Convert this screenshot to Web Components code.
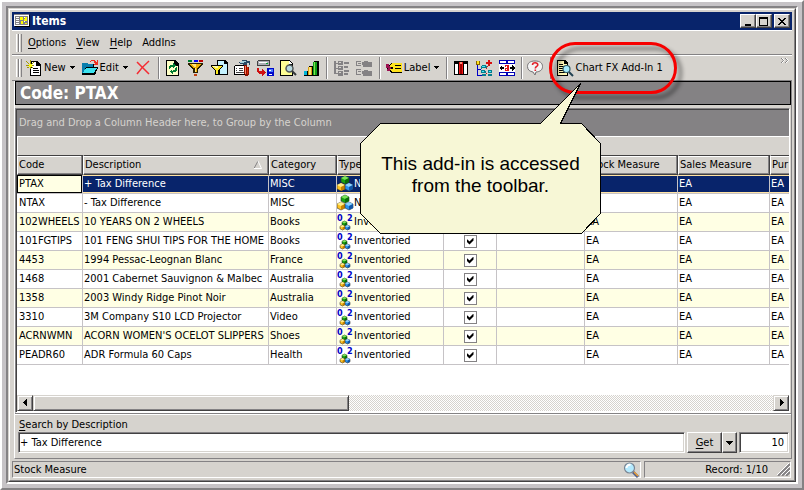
<!DOCTYPE html>
<html lang="en">
<head>
<meta charset="utf-8">
<title>Items</title>
<style>
  html, body { height: 100%; }
  body {
    margin: 0; background: #fff; color: #000; position: relative; overflow: hidden;
    font: 11px/14px "DejaVu Sans Condensed", "DejaVu Sans", Tahoma, sans-serif;
    --face: #d6d3ce; --shade: #848284; --dark: #424142; --navy: #08246b; --silver: #c6c3c6;
  }
  u { text-decoration: underline; text-underline-offset: 2px; }
</style>
</head>
<body>
<app-window>
  <title-bar heading="Items"></title-bar>
  <menu-bar>
    <menu-item><u>O</u>ptions</menu-item>
    <menu-item><u>V</u>iew</menu-item>
    <menu-item><u>H</u>elp</menu-item>
    <menu-item>AddIns</menu-item>
  </menu-bar>
  <tool-bar>
    <tool-button icon="new" menu>New</tool-button>
    <tool-button icon="edit" menu>Edit</tool-button>
    <tool-button icon="delete" hint="Delete"></tool-button>
    <tool-separator></tool-separator>
    <tool-button icon="refresh" hint="Refresh"></tool-button>
    <tool-button icon="funnel" hint="Filter"></tool-button>
    <tool-button icon="pagefilter" hint="Filter page"></tool-button>
    <tool-button icon="tools" hint="Report tools"></tool-button>
    <tool-button icon="transfer" hint="Transfer"></tool-button>
    <tool-button icon="preview" hint="Preview"></tool-button>
    <tool-button icon="chart" hint="Chart"></tool-button>
    <tool-separator></tool-separator>
    <tool-button icon="expand" hint="Expand all"></tool-button>
    <tool-button icon="collapse" hint="Collapse all"></tool-button>
    <tool-separator></tool-separator>
    <tool-button icon="label" menu>Label</tool-button>
    <tool-separator></tool-separator>
    <tool-button icon="columns" hint="Columns"></tool-button>
    <tool-button icon="tree" hint="Group"></tool-button>
    <tool-button icon="fit" hint="Best fit"></tool-button>
    <tool-separator tight></tool-separator>
    <tool-button icon="help" hint="Help"></tool-button>
    <tool-separator></tool-separator>
    <highlight-ring><tool-button icon="addin">Chart FX Add-In 1</tool-button></highlight-ring>
  </tool-bar>
  <main-panel>
    <record-heading>Code: PTAX</record-heading>
    <data-grid></data-grid>
    <search-panel></search-panel>
  </main-panel>
  <status-bar>
    <span>Stock Measure</span>
    <span slot="record">Record: 1/10</span>
  </status-bar>
</app-window>
<callout-note>This add-in is accessed from the toolbar.</callout-note>

<script>
const define = (name, html, setup) => {
  const tpl = document.createElement('template');
  tpl.innerHTML = html;
  customElements.define(name, class extends HTMLElement {
    constructor() {
      super();
      this.attachShadow({ mode: 'open' }).append(tpl.content.cloneNode(true));
    }
    connectedCallback() { if (setup && !this.ready) { this.ready = true; setup(this, this.shadowRoot); } }
  });
};

const page = '<path d="M1 0h9l4 4v12H1z" fill="#000"/><path d="M2 1h7v4h4v10H2z" fill="#ffffc6"/>';
const cube = (x, y, s, a, b, c) => {
  const h = s / 2, q = s / 4;
  return `<path d="M${x} ${y + q}l${h} ${-q}l${h} ${q}v${h}l${-h} ${q}l${-h} ${-q}z" fill="${b}" stroke="#30302a" stroke-width=".6"/>`
    + `<path d="M${x} ${y + q}l${h} ${-q}l${h} ${q}l${-h} ${q}z" fill="${a}"/>`
    + `<path d="M${x + h} ${y + h}l${h} ${-q}v${h}l${-h} ${q}z" fill="${c}"/>`;
};
const smooth = s => `<g shape-rendering="auto">${s}</g>`;
const digit = (x, n) => `<text x="${x}" y="7" font-family="DejaVu Sans Condensed, sans-serif" font-weight="700" font-size="9" fill="#0000c6">${n}</text>`;
const ICONS = {
  app: '<path d="M15 2h1v12H1v-1h14z" fill="#000"/><path d="M0 1h15v12H0z" fill="#fff"/><path d="M0 1h15v1H0zM1 3h13v9H1z" fill="#848284"/><path d="M2 4h3v1H2zm0 2h3v1H2zm0 2h3v1H2zm0 2h3v1H2zM10 4h1v1h-1zM10 8h1v1h-1z" fill="#fff"/><path d="M6 4h3v3H6zm5 0h2v2h-2zM7 8h2v3H7zm3-2h3v2h-3zm1 4h2v1h-2z" fill="#ff0"/>',
  new: '<path d="M5 1h6l4 4v11H4V7h1z" fill="#000"/><path d="M6 2h4v4h4v9H5V8h1z" fill="#fff"/><path d="M11 3l2 2h-2zM7 8h5v1H7zm0 2h6v1H7zm0 2h6v1H7z" fill="#000"/><path d="M0 1h1v1h1v1h1v1h1V0h1v4h1V3h1V2h1v1H7v1H6v1h2v1H6v1h1v1H6V7H5v2H4V7H3v1H1V7h2V6H0V5h3V4H2V3H1V2H0z" fill="#a59a00"/><path d="M3 4h3v3H3z" fill="#ff0"/>',
  edit: '<path d="M0 3h5l1 1h6v3h4v1l-3 7H0z" fill="#000"/><path d="M0 3h5l1 1h5v3H4L1 13H0z" fill="#087dad"/><path d="M4 8h11l-3 5H1z" fill="#3ce3ef"/><path d="M8 1h1V0h4v1h1v1h1V0h1v5h-4V4h1V3h-1V1H9v1H8z" fill="#f03020"/>',
  delete: smooth('<path d="M2 2l12 12M14 1Q7 7 2 14" fill="none" stroke="#f42b32" stroke-width="1.5"/>'),
  refresh: page + '<path d="M9 1h1v4h3v1H9z" fill="#000"/><path d="M4 6h1V5h3V3h1v1h1v1h1v1h-1v1H9v1H8V7H6v1H5v1H4zM6 10h1v1h1v-1h2V8h1V7h1v4h-1v1H8v2H7v-1H6v-1H5v-1h1z" fill="#007d31"/>',
  funnel: '<path d="M0 0h4v2H0z" fill="#007d31"/><path d="M6 0h4v2H6z" fill="#00f"/><path d="M11 0h4v2h-4z" fill="#c00000"/><path d="M0 3h15v2h-1v1h-1v1h-1v1h-1v1h-1v4H5V9H4V8H3V7H2V6H1V5H0z" fill="#2a2000"/><path d="M2 4h11v1h-1v1h-1v1h-1v1H9v4H7V8H5V7H4V6H3V5H2z" fill="#f0b000"/><path d="M4 4h4v3H6V6H5V5H4zM7 8h1v4H7z" fill="#ffe37b"/><path d="M6 14h3v2H6z" fill="#c04010"/>',
  pagefilter: '<path d="M6 0h8l3 3v12H8V8H6z" fill="#000"/><path d="M7 1h6v3h3v10H9V6H7z" fill="#c6f3ff"/><path d="M0 5h12v2h-1v1h-1v1H9v1H8v5H4v-5H3V9H2V8H1V7H0z" fill="#000"/><path d="M1 6h10v1h-1v1H9v1H8v1H7v4H5v-4H4V9H3V8H2V7H1z" fill="#ffeb21"/><path d="M2 6h5v2H4V7H2z" fill="#fffbb0"/>',
  tools: '<path d="M1 5h12v10H0V6h1z" fill="#000"/><path d="M1 6h10v8H1z" fill="#fff"/><path d="M2 8h1v1H2zm3 0h4v1H5zm-3 2h1v1H2zm3 0h4v1H5zm-3 2h9v1H2z" fill="#424142"/><path d="M5 2h3V0h5v1h3v4h-1V3h-2v2H9V4H6V3H5z" fill="#294963"/><path d="M8 1h4v1H8zM6 2h4v1H6z" fill="#a5d3de"/><path d="M10 5h3v2h2v8h-1v1h-3v-2h-1z" fill="#8c1000"/><path d="M11 6h1v8h-1z" fill="#ff8060"/><path d="M13 7h1v7h-1z" fill="#de2800"/>',
  transfer: '<path d="M1 0h12v6H0V1h1z" fill="#424142"/><path d="M1 1h11v4H1z" fill="#adaeb5"/><path d="M2 2h8v1H2z" fill="#fff"/><path d="M9 3h2v1H9z" fill="#00a030"/><path d="M0 8h2v3h3V9h1v1h1v1h1v1h1v1H8v1H7v1H6v1H5v-2H2v-1H1v-1H0z" fill="#d01010"/><path d="M10 8h7v8h-7z" fill="#0008c8"/><path d="M12 9h4v3h-4z" fill="#4a79ff"/><path d="M12 10h2v1h-2zm0 4h3v1h-3z" fill="#fff"/>',
  preview: '<path d="M0 0h9l4 4v12H0z" fill="#000"/><path d="M1 1h8v4h3v10H1z" fill="#ffff94"/><path d="M9 1l3 3H9z" fill="#fff"/>' + smooth('<circle cx="9.500" cy="8.500" r="3.500" fill="#b9d9df" stroke="#52595a" stroke-width="1.500"/><path d="M12 11l4 4" stroke="#33383b" stroke-width="2"/>'),
  chart: '<path d="M1 11h5v5H1zM6 6h5v10H6zM11 1h5v15h-5z" fill="#000"/><path d="M1 11h3v4H1z" fill="#00b5d6"/><path d="M5 7h4v8H5z" fill="#d9a010"/><path d="M6 7h2v8H6z" fill="#ffe37b"/><path d="M10 2h4v13h-4z" fill="#10a018"/><path d="M11 2h1v13h-1z" fill="#84df50"/>',
  expand: '<path d="M1 1h2v2h2V1h5v4H5V4H3v4h2V6h5v4H5V9H3v4h2v-2h5v5H5v-2H1zM11 2h5v2h-5zm0 4h4v2h-4zm0 4h5v2h-5zm0 3h4v2h-4z" fill="#848284"/><path d="M6 2h2v1H6zm0 5h2v1H6zm0 5h2v1H6z" fill="#d6d3ce"/>',
  collapse: '<path d="M0 1h5v1H1v3h4v1H0zM6 2h2V1h4v1h4v5H7V5H6zM0 9h5v1H1v4h4v1H0zM6 11h2v-1h4v1h4v5H7v-2H6zM2 3h3v1H2zm0 8h3v1H2z" fill="#848284"/>',
  label: '<path d="M5 3h11v10H5L1 8z" fill="#000"/><path d="M6 3h10v9H6L3 8z" fill="#ffe31c"/><path d="M9 5h6v1H9zm0 3h6v1H9z" fill="#000"/><path d="M0 4h3v2h1v1h2v2H4v2H1V9h1V8H0z" fill="#9c1050"/><path d="M5 7h2v2H5z" fill="#000"/>',
  columns: '<path d="M1 1h14v14H1z" fill="#000"/><path d="M2 4h3v10H2zm9 0h3v10h-3z" fill="#fff"/><path d="M6 2h4v12H6z" fill="#f01818"/><path d="M7 4h2v10H7z" fill="#a00000"/><path d="M7 2h2v2H7z" fill="#ff9080"/>',
  tree: '<path d="M1 5h1v10h4v1H1zM2 9h3v1H2z" fill="#0000c8"/><path d="M0 1h4v4H0z" fill="#846100"/><path d="M1 1h2v3H1z" fill="#ffe31c"/><path d="M6 5h4v1h1v2H6v1H5V6h1zM5 10h4v1h1v2H5zM12 10h4v3h-4zM6 14h4v2H6zM12 14h4v2h-4z" fill="#087d8c"/><path d="M6 6h3v1H6zM6 11h2v1H6zM13 11h2v1h-2z" fill="#42ebff"/><path d="M11 6h1v1h-1zM10 8h1v1h-1zM10 13h1v1h-1z" fill="#d81010"/><path d="M12 0h2v2h2v2h-2v2h-2V4h-2V2h2z" fill="#d81010"/>',
  fit: '<path d="M0 0h16v16H0z" fill="#0000b5"/><path d="M1 1h6v2H1zm8 0h6v2H9zM0 4h16v8H0zM1 13h6v2H1zm8 0h6v2H9z" fill="#fff"/><path d="M0 8l3-3v2h2v2H3v2zM16 8l-3-3v2h-2v2h2v2z" fill="#000"/><path d="M6 5h4v6H6V8h2V7H6z" fill="#e01818"/><path d="M7 6h1v1H7zm0 3h1v1H7z" fill="#fff"/>',
  help: smooth('<path d="M8 1C3 1 .500 3 .500 6.500S3 11.500 6 12l2 3 1-3c4-.300 6.500-2 6.500-5.500S13 1 8 1z" fill="#f4f4f4" stroke="#737173"/><path d="M5.500 5c0-3 5.500-3 5.300 0-.2 1.500-2.500 1.500-2.500 3.500M8.300 9.500v1.500" fill="none" stroke="#e02028" stroke-width="1.600"/>'),
  addin: '<path d="M0 0h8l3 3v13H0z" fill="#000"/><path d="M1 1h6v3h3v11H1z" fill="#fff7b5"/><path d="M2 4h4v1H2zm0 2h6v1H2zm0 2h5v1H2zm0 2h5v1H2zm0 2h6v1H2z" fill="#000"/>' + smooth('<circle cx="9.500" cy="9" r="3.500" fill="#a5ebff" stroke="#315963" stroke-width="1.200"/><path d="M12 12l4 4" stroke="#214152" stroke-width="2"/>'),
  zoom: smooth('<path d="M10 10l5 5" stroke="#52618c" stroke-width="3"/><path d="M11 10l4 4" stroke="#f0a030" stroke-width="1.500"/><circle cx="6.500" cy="6" r="5" fill="#b5ebff" stroke="#7b8694" stroke-width="1.200"/><path d="M3.500 6a3 3 0 0 1 4-3" stroke="#fff" stroke-width="2" fill="none"/>'),
  noninv: smooth(cube(4, 0, 8, '#7be35a', '#18a510', '#0a6d08') + cube(0, 7, 8, '#ffef8c', '#ffc321', '#c68200') + cube(8, 7, 8, '#8cd3ff', '#2992f0', '#1055a5')),
  inv: smooth(cube(5, 7, 5, '#7be35a', '#18a510', '#0a6d08') + cube(3, 11, 5, '#ffef8c', '#ffc321', '#c68200') + cube(8, 11, 5, '#8cd3ff', '#2992f0', '#1055a5') + digit(0, 0) + digit(10, 2))
};
define('px-icon', `<style>:host{display:block;width:16px;height:16px;flex:none}svg{display:block;overflow:visible}</style>
<svg width="16" height="16" viewBox="0 0 16 16" shape-rendering="crispEdges" aria-hidden="true"></svg>`,
  (el, root) => { root.querySelector('svg').innerHTML = ICONS[el.getAttribute('name')]; });

define('app-window', `<style>
  :host{display:block;box-sizing:border-box;height:100vh;padding:4px;background:#c6c3c6;border:2px solid;border-color:#fff var(--shade) var(--shade) #fff}
  .edge{box-sizing:border-box;height:100%;border:2px solid;border-color:var(--shade) #fff #fff var(--shade)}
  .outer{box-sizing:border-box;height:100%;border:1px solid;border-color:var(--face) var(--dark) var(--dark) var(--face)}
  .frame{box-sizing:border-box;height:100%;background:var(--face);border:1px solid;border-color:#fff var(--shade) var(--shade) #fff;padding:2px;display:flex;flex-direction:column}
</style><div class="edge"><div class="outer"><div class="frame"><slot></slot></div></div></div>`);

define('title-bar', `<style>
  :host{display:flex;flex:none;align-items:center;height:18px;background:var(--navy);color:#fff;padding:0 2px;gap:2px}
  h1{margin:0;font-size:12px;line-height:18px;font-weight:700;flex:1}
  button{box-sizing:border-box;width:16px;height:14px;padding:0;border:1px solid;border-color:#fff var(--dark) var(--dark) #fff;background:var(--face);box-shadow:inset -1px -1px var(--shade);display:block}
  svg{display:block;margin:1px 0 0 2px}
  div{display:flex} .close{margin-left:2px}
</style><px-icon name="app"></px-icon><h1></h1><div>
<button aria-label="Minimize"><svg width="10" height="9"><path d="M2 7h6v2H2z"/></svg></button>
<button aria-label="Maximize"><svg width="10" height="9"><path d="M0 0h9v9H0zM1 2v6h7V2z" fill-rule="evenodd"/></svg></button>
<button class="close" aria-label="Close"><svg width="10" height="9" shape-rendering="crispEdges"><path d="M1 1h2v1h1v1h2V2h1V1h2v1H8v1H7v1H6v1h1v1h1v1h1v1H7V7H6V6H4v1H3v1H1V7h1V6h1V5h1V4H3V3H2V2H1z"/></svg></button></div>`,
  (el, root) => { root.querySelector('h1').textContent = el.getAttribute('heading'); });

const grip = `.grip{flex:none;width:6px;align-self:stretch;margin:3px 0 2px;background:linear-gradient(90deg,#fff 1px,var(--face) 1px 2px,var(--shade) 2px 3px,#fff 3px 4px,var(--face) 4px 5px,var(--shade) 5px)}`;
define('menu-bar', `<style>
  :host{display:flex;flex:none;align-items:center;box-sizing:border-box;height:25px;padding-left:4px;gap:0;border-top:1px solid #fff;border-bottom:1px solid var(--shade)}
  ${grip} nav{display:flex;margin-left:1px}
</style><div class="grip"></div><nav><slot></slot></nav>`);
define('menu-item', `<style>:host{display:block}button{display:block;border:0;background:none;font:inherit;color:inherit;padding:3px 5px}</style><button><slot></slot></button>`);

define('tool-bar', `<style>
  :host{display:flex;flex:none;align-items:center;box-sizing:border-box;height:26px;padding:0 0 1px 4px;gap:1px;border-top:1px solid #fff;border-bottom:1px solid var(--shade)}
  ${grip}
  .more{margin:0 2px 0 auto;align-self:flex-start;border:0;background:none;padding:1px 0;display:block}
</style><div class="grip"></div><slot></slot>
<button class="more" aria-label="More buttons"><svg width="9" height="7" style="display:block"><path d="M0 1l2.500 2.500L0 6M4 1l2.500 2.500L4 6" fill="none" stroke="#848284"/><path d="M1 1l2.500 2.500L1 6M5 1l2.500 2.500L5 6" fill="none" stroke="#fff"/></svg></button>`);
define('tool-button', `<style>
  :host{display:block;flex:none}
  button{display:flex;align-items:center;gap:2px;height:22px;border:0;background:none;font:inherit;color:inherit;padding:0 3px;white-space:nowrap}
  svg{display:none;margin-left:2px} :host([menu]) svg{display:block}
  .t{display:none} .t.on{display:block}
</style><button><px-icon></px-icon><span class="t"><slot></slot></span><svg width="5" height="3" shape-rendering="crispEdges"><path d="M0 0h5v1H4v1H3v1H2V2H1V1H0z"/></svg></button>`,
  (el, root) => {
    const icon = document.createElement('px-icon');
    icon.setAttribute('name', el.getAttribute('icon'));
    root.querySelector('px-icon').replaceWith(icon);
    if (el.textContent.trim()) root.querySelector('.t').classList.add('on');
    else root.querySelector('button').setAttribute('aria-label', el.getAttribute('hint'));
  });
define('tool-separator', `<style>:host{display:block;flex:none;width:1px;height:22px;margin:0 1px 0 3px;background:var(--shade);border-right:1px solid #fff}:host([tight]){margin:0 0 0 2px}</style>`);
define('highlight-ring', `<style>
  :host{display:block;position:relative;flex:none}
  i{position:absolute;inset:-15px -11px -15px -5px;border:3px solid #f70000;border-radius:26px;pointer-events:none;filter:drop-shadow(5px 5px 2px #0007)}
</style><slot></slot><i></i>`);

define('main-panel', `<style>:host{flex:1;min-height:0;display:flex;flex-direction:column;margin:0 0 0 2px;border:1px solid;border-color:#fff var(--shade) var(--shade) #fff;border-top:0}</style><slot></slot>`);
define('record-heading', `<style>:host{display:block;flex:none;background:var(--shade);border:1px solid #000;margin-bottom:3px}h2{margin:0;padding:0 4px;color:#fff;font-size:17px;line-height:22px;font-weight:700}</style><h2><slot></slot></h2>`);

const ROWS = [
  ['PTAX', '+ Tax Difference', 'MISC', 0], ['NTAX', '- Tax Difference', 'MISC', 0],
  ['102WHEELS', '10 YEARS ON 2 WHEELS', 'Books', 1], ['101FGTIPS', '101 FENG SHUI TIPS FOR THE HOME', 'Books', 1],
  ['4453', '1994 Pessac-Leognan Blanc', 'France', 1], ['1468', '2001 Cabernet Sauvignon & Malbec', 'Australia', 1],
  ['1358', '2003 Windy Ridge Pinot Noir', 'Australia', 1], ['3310', '3M Company S10 LCD Projector', 'Video', 1],
  ['ACRNWMN', "ACORN WOMEN'S OCELOT SLIPPERS", 'Shoes', 1], ['PEADR60', 'ADR Formula 60 Caps', 'Health', 1]];
const arrow = d => `<svg width="10" height="10" shape-rendering="crispEdges"><path d="${d}"/></svg>`;
define('data-grid', `<style>
  :host{flex:1;min-height:0;display:flex;flex-direction:column;background:#fff;border:1px solid;border-color:var(--shade) #fff #fff var(--shade);box-shadow:inset 1px 1px var(--dark);padding:1px 0 0 1px;margin-right:1px}
  .group{flex:none;background:var(--shade);color:#d6d3ce;line-height:26px;padding-left:2px;white-space:nowrap;overflow:hidden}
  .band{flex:none;height:18px;background:var(--face);border:1px solid #fff;border-width:1px 0 0 1px}
  .view{flex:1;min-height:0;overflow:hidden}
  table{table-layout:fixed;width:830px;border-collapse:separate;border-spacing:0}
  th{box-sizing:border-box;height:20px;padding:0 1px;background:var(--face);text-align:left;font-weight:400;border:1px solid;border-color:var(--dark) var(--dark) var(--dark) #fff;box-shadow:inset -1px -1px var(--shade),inset 0 1px #fff;white-space:nowrap;overflow:hidden}
  th svg{float:right;margin:3px 5px 0 0}
  td{box-sizing:border-box;height:19px;padding:0 1px;border-right:1px solid var(--silver);border-bottom:1px solid var(--silver);white-space:nowrap;overflow:hidden}
  td:first-child{padding-left:2px}
  td:nth-child(4){padding:0}
  tr:nth-child(odd) td{background:#ffffe4}
  tr.sel td:not(:first-child){background:var(--navy);color:#fff;box-shadow:inset 0 1px #ffe3a5,inset 0 -1px #ffe3a5}
  tr.sel td:first-child{box-shadow:inset 0 0 0 1px #000}
  .type{display:flex;align-items:center;gap:1px}
  .c{text-align:center}
  input{appearance:none;display:block;box-sizing:border-box;width:13px;height:13px;margin:0 auto;border:1px solid var(--shade);background:#fff}
  input:checked::before{content:"";display:block;width:7px;height:7px;margin:2px;background:#000;clip-path:polygon(0 2px,1px 2px,3px 4px,7px 0,7px 3px,3px 7px,0 4px)}
  .scroll{flex:none;display:flex;height:16px;margin-bottom:1px;background:repeating-conic-gradient(#fff 0 25%,var(--face) 0 50%) 0 0/2px 2px}
  .scroll button,.thumb{box-sizing:border-box;flex:none;width:16px;height:16px;padding:0;background:var(--face);border:1px solid;border-color:var(--face) var(--dark) var(--dark) var(--face);box-shadow:inset 1px 1px #fff,inset -1px -1px var(--shade)}
  .scroll .thumb{width:316px} .scroll button:last-child{margin-left:auto}
  .scroll svg{display:block;margin:2px}
</style>
<div class="group">Drag and Drop a Column Header here, to Group by the Column</div><div class="band"></div>
<div class="view"><table><colgroup><col style="width:66px"><col style="width:186px"><col style="width:68px"><col style="width:107px"><col style="width:53px"><col style="width:88px"><col style="width:93px"><col style="width:92px"><col></colgroup>
<thead><tr><th>Code</th><th>Description<svg width="8" height="8"><path d="M4 0L0 7.500" stroke="#848284" fill="none"/><path d="M4 0l3.500 7.500H0" stroke="#fff" fill="none"/></svg></th><th>Category</th><th>Type</th><th></th><th></th><th>Stock Measure</th><th>Sales Measure</th><th>Pur</th></tr></thead><tbody></tbody></table></div>
<div class="scroll"><button aria-label="Scroll left">${arrow('M3 4h1V3h1V2h1V1h1v7H6V7H5V6H4V5H3z')}</button><div class="thumb"></div><button aria-label="Scroll right">${arrow('M4 1h1v1h1v1h1v1h1v1H7v1H6v1H5v1H4z')}</button></div>`,
  (el, root) => {
    root.querySelector('tbody').innerHTML = ROWS.map(([code, desc, cat, inv], i) =>
      `<tr${i ? '' : ' class="sel"'}><td>${code}</td><td>${desc.replace('&', '&amp;')}</td><td>${cat}</td>
       <td><div class="type"><px-icon name="${inv ? 'inv' : 'noninv'}"></px-icon><span>${inv ? 'Inventoried' : 'Non'}</span></div></td>
       <td class="c"><input type="checkbox" aria-label="${code} inventoried"${inv ? ' checked' : ''}></td><td></td><td>EA</td><td>EA</td><td>EA</td></tr>`).join('');
  });

define('search-panel', `<style>
  :host{display:block;flex:none;border-top:1px solid var(--shade);box-shadow:inset 0 1px #fff;padding:4px 2px 5px 3px}
  label{display:block;line-height:14px;padding-left:1px}
  .row{display:flex;gap:2px}
  input{box-sizing:border-box;height:21px;margin:0;padding:0 1px;font:inherit;color:#000;background:#fff;border:1px solid;border-color:var(--shade) #fff #fff var(--shade);box-shadow:inset 1px 1px var(--dark),inset -1px -1px var(--face);border-radius:0;outline:0}
  #q{flex:1;min-width:0} #n{width:50px;text-align:right;padding-right:4px}
  .split{display:flex}
  button{box-sizing:border-box;height:21px;padding:0;font:inherit;color:#000;background:var(--face);border:1px solid;border-color:#fff var(--dark) var(--dark) #fff;box-shadow:inset -1px -1px var(--shade);width:35px}
  button+button{width:15px} svg{display:block;margin:1px auto 0}
  u{text-underline-offset:2px}
</style><label for="q"><u>S</u>earch by Description</label>
<div class="row"><input id="q" value="+ Tax Difference"><div class="split"><button><u>G</u>et</button><button aria-label="Get options"><svg width="7" height="4" shape-rendering="crispEdges"><path d="M0 0h7v1H6v1H5v1H4v1H3V3H2V2H1V1H0z"/></svg></button></div><input id="n" value="10" aria-label="Rows"></div>`);

define('status-bar', `<style>
  :host{display:flex;flex:none;gap:3px;padding:2px 1px 0 0}
  div{box-sizing:border-box;height:17px;border:1px solid;border-color:var(--shade) #fff #fff var(--shade);display:flex;align-items:center;justify-content:space-between;padding:0 1px;flex:1}
  div+div{flex:none;width:147px;justify-content:flex-end;gap:9px;padding:0}
</style><div><slot></slot><px-icon name="zoom"></px-icon></div><div><slot name="record"></slot><svg width="13" height="13"><path d="M1 13L13 1M5 13l8-8M9 13l4-4" stroke="#848284" stroke-width="2"/><path d="M0 12L12 0M4 12l9-9M8 12l5-5" stroke="#fff"/></svg></div>`);

define('callout-note', `<style>
  :host{position:absolute;left:360px;top:83px;width:241px;height:151px;color:#000}
  svg{position:absolute;inset:0;overflow:visible}
  p{position:relative;margin:0;padding:70px 10px 0;text-align:center;font:19px/22px "Liberation Sans",Arial,sans-serif}
</style><svg width="241" height="151" shape-rendering="crispEdges"><path d="M20.500 40.500H180.500L220.500.500L200.500 40.500H221.500L240.500 60.500V130.500L221.500 150.500H20.500L.500 130.500V60.500z" fill="#f7f7d6" stroke="#000"/></svg><p><slot></slot></p>`);
</script>
</body>
</html>
